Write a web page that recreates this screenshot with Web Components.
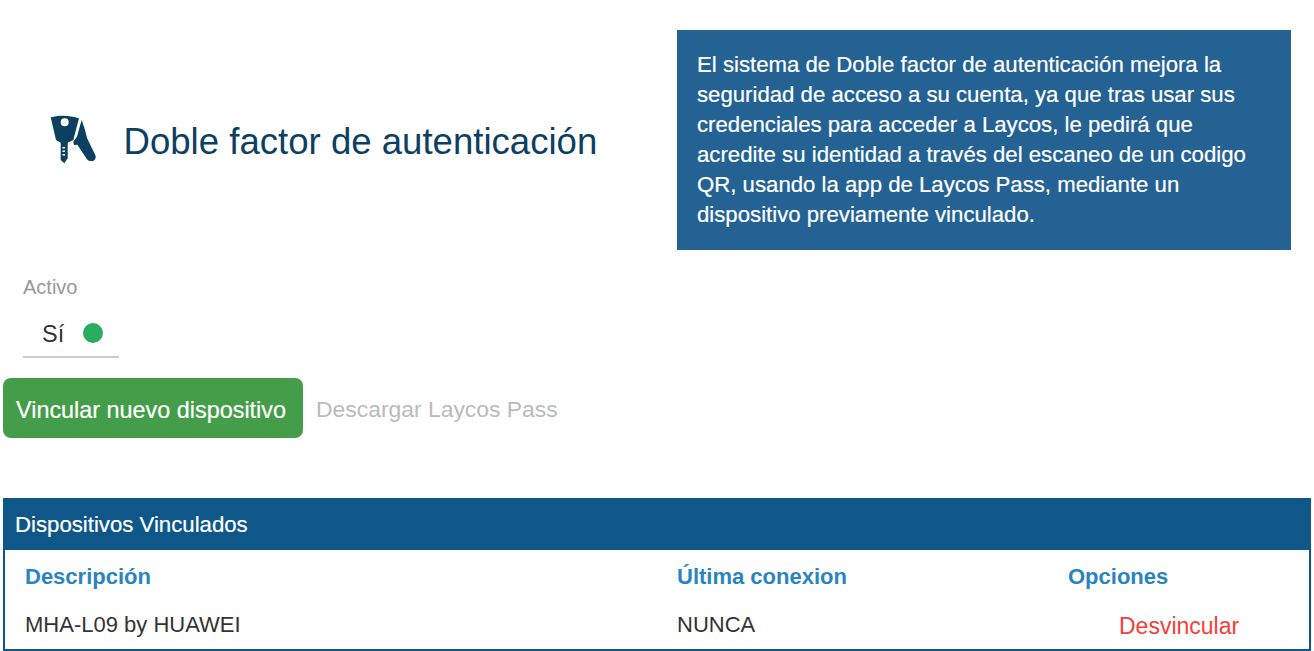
<!DOCTYPE html>
<html lang="es">
<head>
<meta charset="utf-8">
<title>Doble factor de autenticación</title>
<style>
  html, body { margin: 0; background: #fff; overflow: hidden; }
  body { font-family: "Liberation Sans", Arial, sans-serif; color: #333; }
</style>
</head>
<body>
<tfa-page></tfa-page>

<template id="tfa-header">
  <style>
    :host { display: flex; padding: 30px 23px 0 0; }
    .title { flex: 1; display: flex; align-items: center; padding: 4px 0 0 49px; gap: 25.5px; min-width: 0; box-sizing: border-box; }
    h1 { margin: 0; font-size: 36.6px; font-weight: 400; color: #0d3f63; line-height: 40px; white-space: nowrap; }
    svg { width: 49px; height: 54px; flex: none; }
    .info { width: 614px; height: 220px; box-sizing: border-box; padding: 20px; background: #256294; color: #fff; font-size: 22.2px; line-height: 30px; -webkit-text-stroke: 0.2px #fff; }
  </style>
  <div class="title">
    <svg viewBox="0 0 49 54" aria-hidden="true">
      <path fill="#0d3f63" fill-rule="evenodd" d="M1.700 2.300C10 0 21 0 30 3.300L24.300 25 18.700 27.700 18.700 43.300 15.300 48.300 11.700 45 11.700 27.700 7 25ZM15.700 3.300A4 4 0 1 0 15.700 11.300 4 4 0 1 0 15.700 3.300ZM13.500 32V33.500H16V32ZM13.500 35.500V37H16V35.500ZM13.500 39V40.500H16V39Z"/>
      <path fill="#0d3f63" d="M32.700 5L36 15 38 23 46.500 40.500C47.300 43.500 45.500 46 43.500 46 41.500 46.300 39.500 46 38 44.300L28.300 29.700 25 30 24.300 26.700 28 21.700 30.700 11.700Z"/>
    </svg>
    <h1><slot name="title"></slot></h1>
  </div>
  <div class="info"><slot></slot></div>
</template>

<template id="tfa-status">
  <style>
    :host { display: block; padding: 26px 0 0 23px; }
    .label { font-size: 20px; line-height: 22px; color: #999; }
    .value { width: 96px; height: 60px; box-sizing: border-box; border-bottom: 2px solid #ccc; display: flex; align-items: center; padding: 12px 0 0 19px; gap: 19px; font-size: 23.5px; color: #333; }
    .dot { width: 20px; height: 20px; border-radius: 50%; background: #27ae60; margin-top: -1px; }
    .text { margin-top: 3px; }
  </style>
  <div class="label"><slot name="label"></slot></div>
  <div class="value"><span class="text"><slot></slot></span><span class="dot"></span></div>
</template>

<template id="tfa-actions">
  <style>
    :host { display: flex; align-items: center; gap: 13px; padding: 20px 0 0 3px; }
    .btn { width: 300px; height: 60px; box-sizing: border-box; background: #449d48; color: #fff; border-radius: 8px; font-size: 23.4px; line-height: 58px; padding: 3px 0 0 13px; white-space: nowrap; -webkit-text-stroke: 0.2px #fff; }
    .link { color: #bbb; font-size: 22.9px; margin-top: 3px; white-space: nowrap; }
  </style>
  <div class="btn"><slot name="primary"></slot></div>
  <div class="link"><slot name="secondary"></slot></div>
</template>

<template id="tfa-devices">
  <style>
    :host { display: block; margin: 60px 3px 0; border: 2px solid #0f5689; border-top: 0; height: 153px; box-sizing: border-box; }
    .head { margin: 0 -1px; height: 52px; box-sizing: border-box; background: #0f5689; color: #fff; font-size: 22.2px; line-height: 50px; padding: 2px 0 0 11px; -webkit-text-stroke: 0.2px #fff; }
    .grid { display: grid; grid-template-columns: 652px 391px 1fr; padding-left: 20px; }
    .th { font-size: 22px; font-weight: 700; color: #2a84bf; line-height: 24px; margin-top: 15px; }
    .td { font-size: 22px; line-height: 24px; margin-top: 24px; color: #333; white-space: nowrap; }
    .td.action { color: #f63d38; font-size: 23px; padding-left: 51px; margin-top: 25px; }
  </style>
  <div class="head"><slot name="title"></slot></div>
  <div class="grid">
    <div class="th">Descripción</div>
    <div class="th">Última conexion</div>
    <div class="th">Opciones</div>
    <div class="td">MHA-L09 by HUAWEI</div>
    <div class="td">NUNCA</div>
    <div class="td action">Desvincular</div>
  </div>
</template>

<script>
  class TemplateElement extends HTMLElement {
    constructor(id) {
      super();
      const shadow = this.attachShadow({ mode: 'open' });
      shadow.appendChild(document.getElementById(id).content.cloneNode(true));
    }
  }

  class TfaHeader extends TemplateElement { constructor() { super('tfa-header'); } }
  class TfaStatus extends TemplateElement { constructor() { super('tfa-status'); } }
  class TfaActions extends TemplateElement { constructor() { super('tfa-actions'); } }
  class TfaDevices extends TemplateElement { constructor() { super('tfa-devices'); } }

  class TfaPage extends HTMLElement {
    constructor() {
      super();
      const shadow = this.attachShadow({ mode: 'open' });
      shadow.innerHTML = `
        <style>
          :host { display: block; height: 651px; overflow: hidden; }
        </style>
        <tfa-header>
          <span slot="title">Doble factor de autenticación</span>
          El sistema de Doble factor de autenticación mejora la seguridad de acceso a su cuenta, ya que tras usar sus credenciales para acceder a Laycos, le pedirá que acredite su identidad a través del escaneo de un codigo QR, usando la app de Laycos Pass, mediante un dispositivo previamente vinculado.
        </tfa-header>
        <tfa-status>
          <span slot="label">Activo</span>
          Sí
        </tfa-status>
        <tfa-actions>
          <span slot="primary">Vincular nuevo dispositivo</span>
          <span slot="secondary">Descargar Laycos Pass</span>
        </tfa-actions>
        <tfa-devices>
          <span slot="title">Dispositivos Vinculados</span>
        </tfa-devices>`;
    }
  }

  customElements.define('tfa-header', TfaHeader);
  customElements.define('tfa-status', TfaStatus);
  customElements.define('tfa-actions', TfaActions);
  customElements.define('tfa-devices', TfaDevices);
  customElements.define('tfa-page', TfaPage);
</script>
</body>
</html>
